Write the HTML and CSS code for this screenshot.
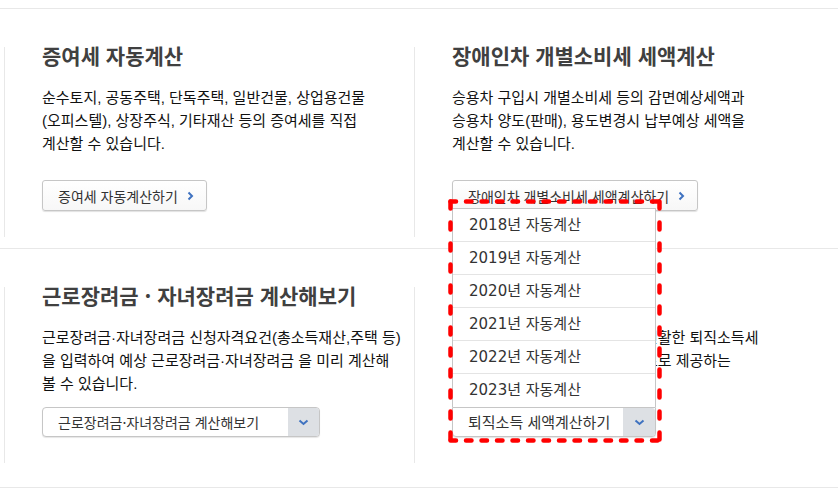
FILE: index.html
```html
<!DOCTYPE html>
<html lang="ko">
<head>
    <meta charset="UTF-8">
    <meta name="viewport" content="width=device-width, initial-scale=1.0">
    <title>자동계산 서비스</title>
    <link rel="stylesheet" href="styles.css">
</head>
<body>
    <div class="calc-list">
        <div class="calc-row">
            <div class="calc-item">
                <h3 class="calc-title">증여세 자동계산</h3>
                <p class="calc-desc">순수토지, 공동주택, 단독주택, 일반건물, 상업용건물<br>(오피스텔), 상장주식, 기타재산 등의 증여세를 직접<br>계산할 수 있습니다.</p>
                <a href="#" class="btn-link">증여세 자동계산하기
                    <svg class="ico-next" width="7" height="10" viewBox="0 0 7 10"><polyline points="1.5,1.5 5,5 1.5,8.5" /></svg>
                </a>
            </div>
            <div class="calc-item">
                <h3 class="calc-title">장애인차 개별소비세 세액계산</h3>
                <p class="calc-desc">승용차 구입시 개별소비세 등의 감면예상세액과<br>승용차 양도(판매), 용도변경시 납부예상 세액을<br>계산할 수 있습니다.</p>
                <a href="#" class="btn-link">장애인차 개별소비세 세액계산하기
                    <svg class="ico-next" width="7" height="10" viewBox="0 0 7 10"><polyline points="1.5,1.5 5,5 1.5,8.5" /></svg>
                </a>
            </div>
        </div>
        <div class="calc-row">
            <div class="calc-item">
                <h3 class="calc-title">근로장려금 · 자녀장려금 계산해보기</h3>
                <p class="calc-desc">근로장려금·자녀장려금 신청자격요건(총소득재산,주택 등)<br>을 입력하여 예상 근로장려금·자녀장려금 을 미리 계산해<br>볼 수 있습니다.</p>
                <div class="select-box select-wide">
                    <span class="select-label">근로장려금·자녀장려금 계산해보기</span>
                    <span class="select-arrow">
                        <svg width="11" height="7" viewBox="0 0 11 7"><polyline points="1.5,1.5 5.5,5 9.5,1.5" /></svg>
                    </span>
                </div>
            </div>
            <div class="calc-item">
                <h3 class="calc-title">퇴직소득 세액계산</h3>
                <p class="calc-desc">퇴직소득이 발생하는 근로자의 원활한 퇴직소득세<br>신고를 위해 계산프로그램을 무료로 제공하는<br>서비스입니다.</p>
                <div class="select-box select-open">
                    <span class="select-label">퇴직소득 세액계산하기</span>
                    <span class="select-arrow">
                        <svg width="11" height="7" viewBox="0 0 11 7"><polyline points="1.5,1.5 5.5,5 9.5,1.5" /></svg>
                    </span>
                    <ul class="select-options">
                        <li><a href="#">2018년 자동계산</a></li>
                        <li><a href="#">2019년 자동계산</a></li>
                        <li><a href="#">2020년 자동계산</a></li>
                        <li><a href="#">2021년 자동계산</a></li>
                        <li><a href="#">2022년 자동계산</a></li>
                        <li><a href="#">2023년 자동계산</a></li>
                    </ul>
                    <!-- highlight box drawn over the open menu -->
                    <svg class="highlight" width="214" height="244" viewBox="0 0 214 244">
                        <path class="hl-h" d="M2.5 2.5 H211.5 M2.5 241.5 H211.5" />
                        <path class="hl-v" d="M2.5 2.5 V241.5 M211.5 2.5 V241.5" />
                    </svg>
                </div>
            </div>
        </div>
    </div>
</body>
</html>
```

FILE: styles.css
```css
body {
    margin: 0;
    padding: 8px 0 0;
    font-family: 'Noto Sans CJK KR', sans-serif;
    color: #111;
    background: #fff;
}
.calc-list {
    width: 100%;
}
.calc-row {
    display: grid;
    grid-template-columns: 410px 410px;
    align-items: start;
    padding-left: 4px;
    height: 240px;
    box-sizing: border-box;
    border-top: 1px solid #e8e8e8;
}
.calc-row:last-child {
    border-bottom: 1px solid #e8e8e8;
}
.calc-item {
    margin-top: 38px;
    padding: 0 0 26px 37px;
    border-left: 1px solid #e8e8e8;
}
.calc-title {
    margin: -4px 0 0;
    font-size: 21px;
    line-height: 24px;
    font-weight: bold;
    color: #404040;
}
.calc-desc {
    margin: 19px 0 12px;
    font-family: 'Liberation Sans', 'Noto Sans CJK KR', sans-serif;
    font-size: 15px;
    line-height: 23px;
    color: #111;
}

/* buttons */
.btn-link {
    display: flex;
    align-items: center;
    width: max-content;
    height: 31px;
    box-sizing: border-box;
    margin-top: 25px;
    padding: 0 12px 0 15px;
    border: 1px solid #c6c6c6;
    border-radius: 3px;
    background: linear-gradient(#fff, #f7f7f7);
    box-shadow: 0 1px 1px rgba(0, 0, 0, 0.12);
    font-size: 14px;
    color: #333;
    text-decoration: none;
}
.ico-next {
    margin-left: 9px;
}
.ico-next polyline,
.select-arrow polyline {
    fill: none;
    stroke: #3f72c0;
    stroke-width: 2;
}

/* select boxes */
.select-box {
    position: relative;
    display: flex;
    height: 30px;
    box-sizing: border-box;
    border: 1px solid #c6c6c6;
    border-radius: 4px;
    background: #fff;
    box-shadow: 0 1px 1px rgba(0, 0, 0, 0.1);
    color: #333;
}
.select-wide {
    width: 278px;
    font-size: 14px;
}
.select-open {
    width: 204px;
    font-size: 15px;
    border-top-left-radius: 0;
    border-top-right-radius: 0;
}
.select-label {
    flex: 1;
    padding-left: 15px;
    line-height: 28px;
    white-space: nowrap;
}
.select-arrow {
    display: flex;
    align-items: center;
    justify-content: center;
    width: 31px;
    background: #dde0e4;
    border-radius: 0 3px 3px 0;
}
.select-open .select-arrow {
    width: 32px;
}
.select-options {
    position: absolute;
    left: -1px;
    right: -1px;
    bottom: 100%;
    margin: 0 0 1px;
    padding: 0;
    list-style: none;
    background: #fff;
    border: 1px solid #c6c6c6;
    border-bottom: none;
    z-index: 10;
}
.select-options li {
    height: 33px;
    box-sizing: border-box;
    border-bottom: 1px solid #e4e4e4;
}
.select-options li:last-child {
    border-bottom: none;
}
.select-options a {
    display: block;
    padding-left: 16px;
    line-height: 32px;
    font-family: 'DejaVu Sans', 'Noto Sans CJK KR', sans-serif;
    font-size: 15px;
    color: #333;
    text-decoration: none;
}
.highlight {
    position: absolute;
    left: -5px;
    top: -209px;
    z-index: 20;
}
.highlight path {
    fill: none;
    stroke: #ff0000;
    stroke-width: 4.5;
    stroke-linecap: round;
}
.hl-h {
    stroke-dasharray: 5.5 10;
}
.hl-v {
    stroke-dasharray: 7 14;
}
```
